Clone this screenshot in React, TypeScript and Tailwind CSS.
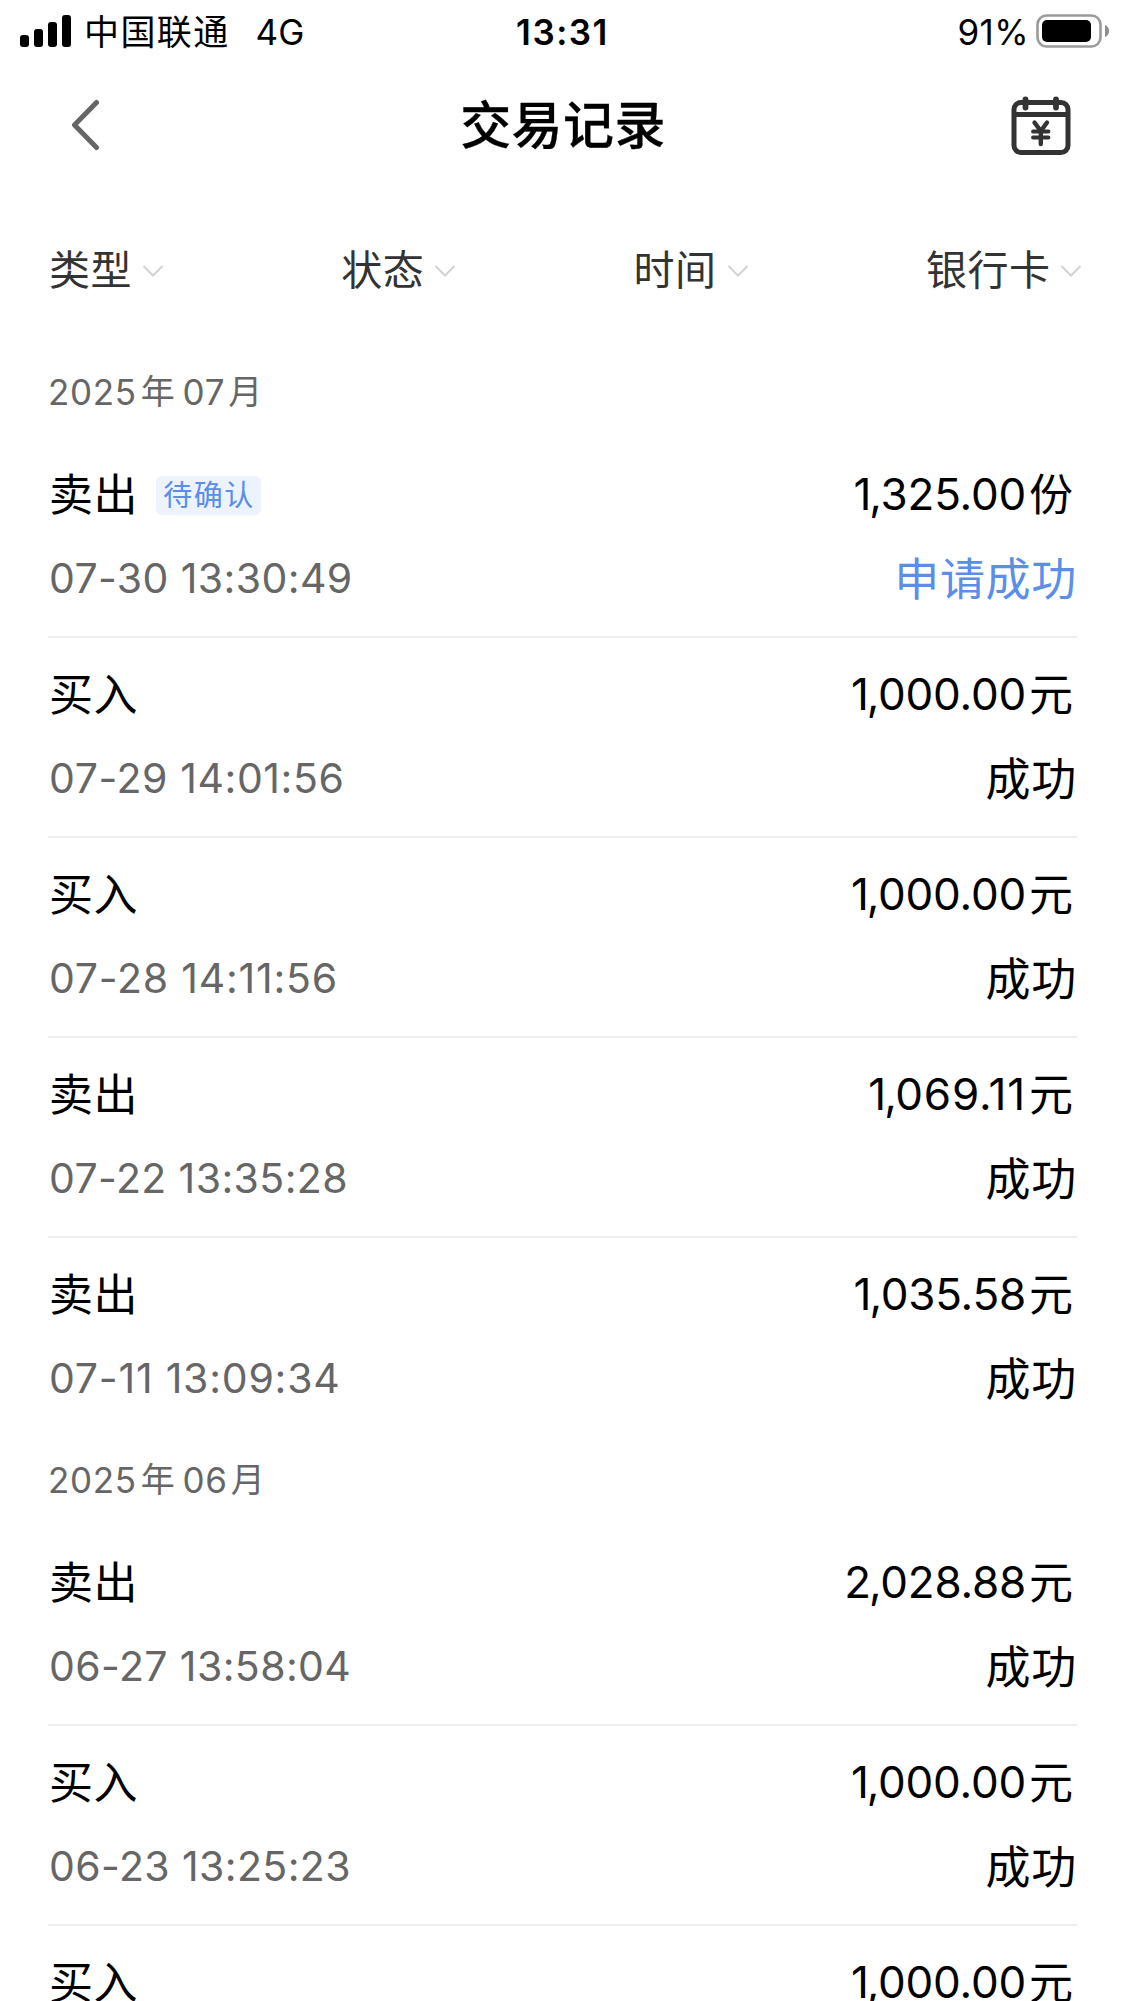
type Transaction = {
  id: number;
  kind: string;
  tag?: string;
  amount: string;
  unit: string;
  time?: string;
  status?: string;
  pending?: boolean;
};

type Month = { year: string; month: string; items: Transaction[] };

const months: Month[] = [
  {
    year: "2025",
    month: "07",
    items: [
      { id: 1, kind: "卖出", tag: "待确认", amount: "1,325.00", unit: "份", time: "07-30 13:30:49", status: "申请成功", pending: true },
      { id: 2, kind: "买入", amount: "1,000.00", unit: "元", time: "07-29 14:01:56", status: "成功" },
      { id: 3, kind: "买入", amount: "1,000.00", unit: "元", time: "07-28 14:11:56", status: "成功" },
      { id: 4, kind: "卖出", amount: "1,069.11", unit: "元", time: "07-22 13:35:28", status: "成功" },
      { id: 5, kind: "卖出", amount: "1,035.58", unit: "元", time: "07-11 13:09:34", status: "成功" },
    ],
  },
  {
    year: "2025",
    month: "06",
    items: [
      { id: 6, kind: "卖出", amount: "2,028.88", unit: "元", time: "06-27 13:58:04", status: "成功" },
      { id: 7, kind: "买入", amount: "1,000.00", unit: "元", time: "06-23 13:25:23", status: "成功" },
      { id: 8, kind: "买入", amount: "1,000.00", unit: "元" },
    ],
  },
];

const filters = ["类型", "状态", "时间", "银行卡"];

const tracking = (text: string, base: number, perOne: number) => `${base + perOne * (text.split("1").length - 1)}px`;

function StatusBar() {
  return (
    <div className="flex h-[62px] items-center justify-between pl-5 pr-[15px] text-[35px] leading-[40px] text-black">
      <div className="flex w-[400px] items-center">
        <svg width="51" height="32" viewBox="0 0 51 32" fill="currentColor">
          <rect x="0" y="20" width="9" height="12" rx="3" />
          <rect x="14" y="14" width="9" height="18" rx="3" />
          <rect x="28" y="7" width="9" height="25" rx="3" />
          <rect x="42" y="0" width="9" height="32" rx="3" />
        </svg>
        <span className="ml-[13px] mt-0.5 tracking-[1.4px]">中国联通</span>
        <span className="ml-[26px] mt-0.5">4G</span>
      </div>
      <div className="mr-[5px] mt-px text-[35px] font-semibold tracking-[1.5px]">13:31</div>
      <div className="flex w-[400px] items-center justify-end">
        <span className="mt-px tracking-[0.4px]">91%</span>
        <svg className="ml-[7px]" width="74" height="34" viewBox="0 0 74 34">
          <rect x="1.5" y="1.5" width="63" height="31" rx="9" fill="none" stroke="#9b9b9b" strokeWidth="2.6" />
          <rect x="6" y="6" width="49" height="22" rx="5" fill="#000" />
          <path d="M69 11c5.500 2 5.500 10 0 12z" fill="#8e8e8e" />
        </svg>
      </div>
    </div>
  );
}

function CalendarIcon() {
  return (
    <svg width="60" height="60" viewBox="0 0 60 60" fill="none" stroke="#333" strokeWidth="5">
      <rect x="3" y="7.500" width="54" height="50" rx="7" />
      <path d="M3 19.500H57" />
      <path d="M14.500 4.500V12.500M45 4.500V12.500" strokeWidth="5.800" strokeLinecap="round" />
      <g strokeWidth="4.400" strokeLinecap="round">
        <path d="M23.500 27.500L29.800 36L36 27.500M29.800 36V49" />
        <path d="M22 36.500H37.500M22 42.500H37.500" strokeWidth="3.800" />
      </g>
    </svg>
  );
}

function Header() {
  return (
    <div className="flex h-[126px] items-center justify-between pl-[70px] pr-[54px]">
      <svg width="60" height="52" viewBox="0 0 60 52" fill="none" stroke="#666" strokeWidth="5" strokeLinecap="round" strokeLinejoin="round">
        <path d="M26.500 3.500L4.500 26L26.500 48.500" />
      </svg>
      <h1 className="ml-[-15px] mt-0.5 text-[51px] font-medium leading-[60px] tracking-[0.400px] text-black [-webkit-text-stroke:0.3px_#000]">
        交易记录
      </h1>
      <CalendarIcon />
    </div>
  );
}

function FilterBar() {
  return (
    <div className="flex h-[162px] items-center pl-[49px] pt-0.5">
      {filters.map((name) => (
        <div key={name} className="flex w-[292.300px] shrink-0 items-center last:w-auto">
          <span className="text-[41px] leading-[50px] tracking-[0.500px] text-[#333]">{name}</span>
          <svg className="ml-[10px] mt-px" width="22" height="14" viewBox="0 0 22 14" fill="none" stroke="#d2d2d2" strokeWidth="2">
            <path d="M1.500 2L11 11.500L20.500 2" />
          </svg>
        </div>
      ))}
    </div>
  );
}

function Amount({ value, unit }: { value: string; unit: string }) {
  const [head, tail] = value.split(",");
  return (
    <div className="flex items-center pr-1">
      <span className="mb-0.5 flex">
        <span>{head}</span>
        <span className="-ml-0.5 -mr-[1.500px]">,</span>
        <span style={{ letterSpacing: tracking(tail, -0.2, 0.5) }}>{tail}</span>
      </span>
      <span className="ml-[3px]">{unit}</span>
    </div>
  );
}

function Row({ item }: { item: Transaction }) {
  return (
    <li className="flex h-[200px] flex-col gap-7 border-b-2 border-[#eee] pt-[29px] last:border-transparent">
      <div className="flex h-14 items-center justify-between text-[44px] leading-[56px] text-black">
        <div className="flex items-center pl-px">
          <span className="tracking-[0.600px]">{item.kind}</span>
          {item.tag && (
            <span className="ml-[18px] flex h-[39px] items-center rounded-md bg-[#edf3fd] pl-[7px] pr-[6px] text-[29px] leading-[39px] tracking-[1.500px] text-[#5a8ee8]">
              {item.tag}
            </span>
          )}
        </div>
        <Amount value={item.amount} unit={item.unit} />
      </div>
      {item.time && (
        <div className="flex h-14 items-center justify-between leading-[56px]">
          <span className="mb-0.5 pl-px text-[41px] text-[#666]" style={{ letterSpacing: tracking(item.time, 0.2, 0.19) }}>
            {item.time}
          </span>
          <span className={item.pending ? "mt-0.5 text-[45px] tracking-[0.700px] text-[#5a8ee8]" : "mt-0.5 text-[45px] tracking-[0.700px] text-black"}>
            {item.status}
          </span>
        </div>
      )}
    </li>
  );
}

export default function App() {
  return (
    <main className="h-[2001px] w-[1125px] overflow-hidden bg-white font-['Inter','Noto_Sans_CJK_SC',sans-serif]">
      <StatusBar />
      <Header />
      <FilterBar />
      {months.map((group) => (
        <section key={group.month} className="px-12">
          <h2 className="flex h-[88px] items-center pb-1 text-[35px] leading-[48px] tracking-[0.700px] text-[#666]">
            <span>{group.year}</span>
            <span className="ml-1 text-[34px]">年</span>
            <span className="ml-[7px]">{group.month}</span>
            <span className="ml-[3px] text-[34px]">月</span>
          </h2>
          <ul>
            {group.items.map((item) => (
              <Row key={item.id} item={item} />
            ))}
          </ul>
        </section>
      ))}
    </main>
  );
}
